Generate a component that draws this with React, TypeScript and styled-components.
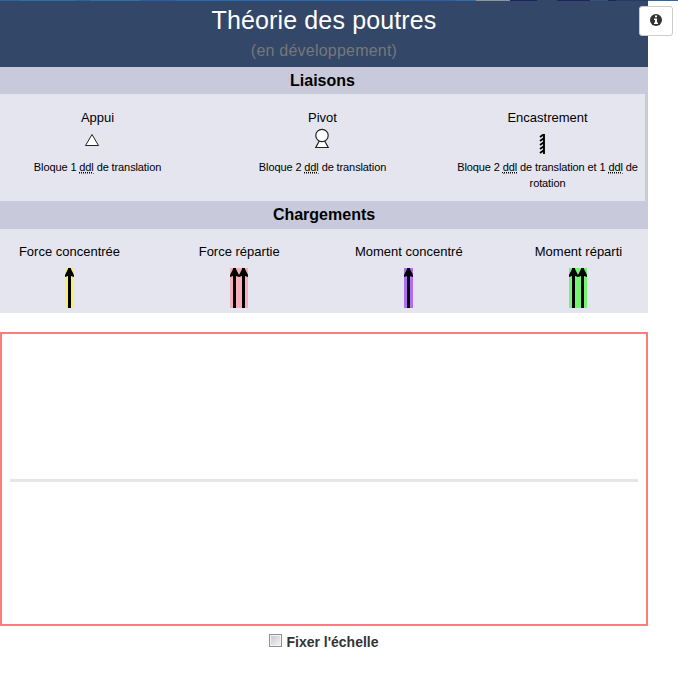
import React from 'react';
import styled, { createGlobalStyle } from 'styled-components';

const GlobalStyle = createGlobalStyle`
  * { box-sizing: border-box; }
  body {
    margin: 0;
    overflow: hidden;
    background: #fff;
    color: #000;
    font-family: "Liberation Sans", Arial, sans-serif;
    font-size: 13px;
  }
`;

const PhotoStrip = styled.div`
  height: 1px;
  background: linear-gradient(
    90deg,
    #2766ab 0 20px, #2a6fb0 20px 75px, #2365ab 75px 90px, #2c70b0 90px 140px,
    #2161ac 140px 175px, #286bb0 175px 400px, #2463ab 400px 455px, #2d6eb0 455px 476px,
    #8b9796 476px 510px, #1b2460 510px 537px, #33486d 537px 557px, #1b2460 557px 590px,
    #34507c 590px 608px, #1b2460 608px 616px, #263a66 616px 648px, #2568b0 648px
  );
`;

const Page = styled.div`
  display: flex;
  align-items: flex-start;
`;

const Main = styled.main`
  width: 648px;
`;

const Header = styled.header`
  height: 66px;
  padding-top: 2px;
  background: #334769;
  text-align: center;
`;

const Title = styled.h1`
  margin: 0;
  color: #fff;
  font-size: 25px;
  font-weight: 400;
  letter-spacing: 0.14px;
  line-height: 34px;
`;

const Subtitle = styled.div`
  margin-top: 2px;
  color: #777;
  font-size: 16px;
  letter-spacing: 0.22px;
  line-height: 24px;
`;

const SectionTitle = styled.h2<{ $height: number; $inset: number }>`
  height: ${({ $height }) => $height}px;
  margin: 0;
  padding-right: ${({ $inset }) => $inset}px;
  background: #c8cadb;
  font-size: 16px;
  line-height: 27px;
  text-align: center;
`;

const SupportsBand = styled.section`
  padding-right: 3px;
  background: #c8cadb;
`;

const Supports = styled.div`
  display: grid;
  grid-template-columns: repeat(3, 195px);
  column-gap: 30px;
  height: 107px;
  padding-top: 15px;
  background: #e5e5ef;
`;

const Loads = styled.section`
  display: grid;
  grid-template-columns: repeat(4, 139px);
  justify-content: space-between;
  height: 84px;
  padding-top: 14px;
  background: #e5e5ef;
`;

const Item = styled.div`
  display: flex;
  flex-direction: column;
  align-items: center;
  text-align: center;
`;

const Label = styled.div`
  line-height: 17px;
  white-space: nowrap;
`;

const SupportIcon = styled.svg<{ $shift: number }>`
  display: block;
  width: 16px;
  height: 22px;
  margin: 2px ${({ $shift }) => $shift}px 9px 0;
`;

const Description = styled.div`
  font-size: 11px;
  letter-spacing: -0.11px;
  line-height: 16px;
`;

const Abbr = styled.abbr`
  border-bottom: 1px dotted #777;
  text-decoration: underline dotted #000;
`;

const LoadIcon = styled.svg`
  display: block;
  height: 40px;
  margin-top: 8px;
`;

const Canvas = styled.section`
  display: flex;
  align-items: center;
  height: 294px;
  margin-top: 19px;
  padding: 2px 8px 0;
  border: 2px solid #fc7b7b;
`;

const Beam = styled.div`
  width: 100%;
  height: 3px;
  background: #e5e5e5;
`;

const ScaleOption = styled.label`
  display: flex;
  justify-content: center;
  align-items: center;
  gap: 4px;
  margin-top: 6px;
  color: #333;
  font-size: 14px;
  font-weight: 700;
  line-height: 20px;
`;

const Checkbox = styled.input`
  appearance: none;
  width: 13px;
  height: 13px;
  margin: 0 0 3px;
  border: 1px solid #8e8f8f;
  outline: 1px solid #f4f4f4;
  outline-offset: -2px;
  background: linear-gradient(135deg, #c3c7cc, #f6f6f6) padding-box;

  &:checked { background: #334769; }
`;

const InfoButton = styled.button`
  display: grid;
  place-items: center;
  flex: none;
  width: 34px;
  height: 30px;
  margin: 5px 0 0 -9px;
  padding: 0 0 2px;
  border: 1px solid #ccc;
  border-radius: 3px;
  background: #fff;
`;

type SupportKind = 'appui' | 'pivot' | 'encastrement';

const supportShapes: Record<SupportKind, React.ReactNode> = {
  appui: <path d="M1.5 17.5H14.5L8 6.5Z" fill="#fff" stroke="#222" />,
  pivot: (
    <g fill="#fff" stroke="#222" strokeWidth="1.2">
      <path d="M5 13.5L1.8 19.5H14.2L11 13.5Z" />
      <circle cx="8" cy="7.5" r="6.2" />
    </g>
  ),
  encastrement: (
    <path
      d="M10 6V26M9.5 6.5L6 9M9.5 10.5L6 13M9.5 14.5L6 17M9.5 18.5L6 21M9.5 22.5L6 25"
      fill="none"
      stroke="#000"
      strokeWidth="1.9"
    />
  ),
};

const supports: { label: string; kind: SupportKind; shift: number; text: React.ReactNode }[] = [
  { label: 'Appui', kind: 'appui', shift: 11, text: <>Bloque 1 <Abbr>ddl</Abbr> de translation</> },
  { label: 'Pivot', kind: 'pivot', shift: 0.4, text: <>Bloque 2 <Abbr>ddl</Abbr> de translation</> },
  {
    label: 'Encastrement',
    kind: 'encastrement',
    shift: 11,
    text: <>Bloque 2 <Abbr>ddl</Abbr> de translation et 1 <Abbr>ddl</Abbr> de rotation</>,
  },
];

const loads = [
  { label: 'Force concentrée', color: '#f5ef72', arrows: 1 },
  { label: 'Force répartie', color: '#f5afb7', arrows: 2 },
  { label: 'Moment concentré', color: '#b16ef5', arrows: 1 },
  { label: 'Moment réparti', color: '#73f573', arrows: 2 },
];

function Arrows({ color, count }: { color: string; count: number }) {
  const width = count * 9;
  return (
    <LoadIcon width={width} height="40" viewBox={`0 0 ${width} 40`}>
      <rect width={width} height="40" fill={color} />
      {Array.from({ length: count }, (_, i) => (
        <path
          key={i}
          transform={`translate(${i * 9} 0)`}
          d="M3 40V8L0 9V7L3 1V0H6V1L9 7V9L6 8V40Z"
        />
      ))}
    </LoadIcon>
  );
}

export default function App() {
  return (
    <>
      <GlobalStyle />
      <PhotoStrip />
      <Page>
        <Main>
          <Header>
            <Title>Théorie des poutres</Title>
            <Subtitle>(en développement)</Subtitle>
          </Header>
          <SectionTitle $height={27} $inset={3}>Liaisons</SectionTitle>
          <SupportsBand>
            <Supports>
              {supports.map(({ label, kind, shift, text }) => (
                <Item key={label}>
                  <Label>{label}</Label>
                  <SupportIcon $shift={shift} viewBox="0 0 16 22" overflow="visible">
                    {supportShapes[kind]}
                  </SupportIcon>
                  <Description>{text}</Description>
                </Item>
              ))}
            </Supports>
          </SupportsBand>
          <SectionTitle $height={28} $inset={0}>Chargements</SectionTitle>
          <Loads>
            {loads.map(({ label, color, arrows }) => (
              <Item key={label}>
                <Label>{label}</Label>
                <Arrows color={color} count={arrows} />
              </Item>
            ))}
          </Loads>
          <Canvas>
            <Beam />
          </Canvas>
          <ScaleOption>
            <Checkbox type="checkbox" />
            Fixer l'échelle
          </ScaleOption>
        </Main>
        <InfoButton aria-label="Informations">
          <svg width="12" height="12" viewBox="0 0 12 12">
            <circle cx="6" cy="6" r="6" fill="#333" />
            <path d="M5 1.5H7V3.3H5ZM4 4.5H7V8.5H8V10H4V8.5H5V6H4Z" fill="#fff" />
          </svg>
        </InfoButton>
      </Page>
    </>
  );
}
